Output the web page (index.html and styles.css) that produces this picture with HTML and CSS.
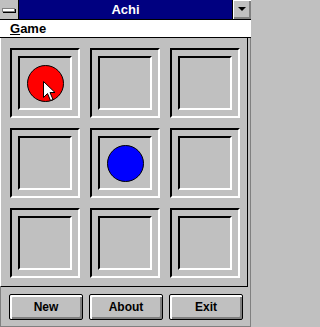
FILE: index.html
```
<!DOCTYPE html>
<html>
<head>
<meta charset="utf-8">
<title>Achi</title>
<link rel="stylesheet" href="styles.css">
</head>
<body>
<div class="window">
  <div class="titlebar">
    <div class="sysbox"><div class="dash"></div></div>
    <div class="title">Achi</div>
    <div class="minbtn"><div class="tri"></div></div>
  </div>
  <div class="menubar"><span class="menuitem"><u>G</u>ame</span></div>
  <div class="client">
    <div class="board">
      <div class="cell"><div class="inner"><div class="piece red"></div></div></div>
      <div class="cell"><div class="inner"></div></div>
      <div class="cell"><div class="inner"></div></div>
      <div class="cell"><div class="inner"></div></div>
      <div class="cell"><div class="inner"><div class="piece blue"></div></div></div>
      <div class="cell"><div class="inner"></div></div>
      <div class="cell"><div class="inner"></div></div>
      <div class="cell"><div class="inner"></div></div>
      <div class="cell"><div class="inner"></div></div>
    </div>
    <div class="buttons">
      <div class="btn">New</div>
      <div class="btn">About</div>
      <div class="btn">Exit</div>
    </div>
  </div>
  <svg class="cursor" width="13" height="21" viewBox="0 0 13 21">
    <path d="M0.5 0.5 L0.5 16.5 L4.5 12.5 L7.5 19.5 L10 18.5 L7 11.5 L12 11.5 Z" fill="#fff" stroke="#000" stroke-width="1" stroke-linejoin="miter"/>
  </svg>
</div>
</body>
</html>
```
FILE: styles.css
```
html, body {
  margin: 0;
  padding: 0;
  background: #c0c0c0;
}
.window {
  position: relative;
  width: 251px;
  height: 327px;
  overflow: hidden;
  font-family: "Liberation Sans", Arial, sans-serif;
  background: #c0c0c0;
}
.titlebar {
  display: flex;
  height: 19px;
  border-bottom: 1px solid #000;
}
.sysbox {
  width: 18px;
  background: #c0c0c0;
  border-right: 1px solid #000;
  display: flex;
  align-items: center;
  justify-content: center;
}
.dash {
  width: 13px;
  height: 4px;
  box-sizing: border-box;
  background: #fff;
  border: 1px solid #808080;
  box-shadow: 1px 1px 0 #000;
  margin-left: -1px;
}
.title {
  flex: 1;
  background: #000080;
  color: #fff;
  font-weight: bold;
  font-size: 13px;
  line-height: 19px;
  text-align: center;
}
.minbtn {
  width: 19px;
  border-left: 1px solid #000;
  background: #c0c0c0;
  box-sizing: border-box;
  box-shadow: inset 1px 1px 0 #fff, inset -2px -2px 0 #808080;
  display: flex;
  align-items: center;
  justify-content: center;
}
.tri {
  width: 0;
  height: 0;
  border-left: 4px solid transparent;
  border-right: 4px solid transparent;
  border-top: 4px solid #000;
  margin: -1px 1px 0 0;
}
.menubar {
  height: 17px;
  background: #fff;
  border-bottom: 1px solid #000;
  font-size: 13px;
  font-weight: bold;
  line-height: 17px;
}
.menuitem {
  padding-left: 10px;
}
.menuitem u {
  text-underline-offset: 1px;
}
.client {
  display: flex;
  flex-direction: column;
  height: 289px;
  border-right: 1px solid #808080;
  box-sizing: border-box;
}
.board {
  width: 248px;
  box-sizing: border-box;
  border-left: 1px solid #fff;
  border-right: 1px solid #000;
  border-bottom: 1px solid #000;
  padding: 10px 7px 8px 9px;
  display: grid;
  grid-template-columns: repeat(3, 70px);
  grid-template-rows: repeat(3, 70px);
  gap: 10px;
}
.cell {
  box-sizing: border-box;
  border: 2px solid;
  border-color: #000 #fff #fff #000;
  display: flex;
  align-items: center;
  justify-content: center;
}
.inner {
  width: 54px;
  height: 54px;
  box-sizing: border-box;
  border: 2px solid;
  border-color: #000 #fff #fff #000;
  display: flex;
  align-items: center;
  justify-content: center;
}
.piece {
  width: 37px;
  height: 37px;
  box-sizing: border-box;
  border-radius: 50%;
  border: 1px solid #000;
}
.red { background: #ff0000; }
.blue { background: #0000ff; }
.buttons {
  flex: 1;
  display: flex;
  gap: 6px;
  padding: 7px 0 0 8px;
  border-left: 1px solid #808080;
  border-bottom: 1px solid #808080;
}
.btn {
  width: 74px;
  height: 26px;
  box-sizing: border-box;
  border: 1px solid #000;
  border-radius: 2px;
  background: #c0c0c0;
  box-shadow: inset 1px 1px 0 #fff, inset 2px 2px 0 #fff, inset -2px -2px 0 #808080;
  font-size: 12px;
  font-weight: bold;
  display: flex;
  align-items: center;
  justify-content: center;
}
.cursor {
  position: absolute;
  left: 43px;
  top: 81px;
}
```
